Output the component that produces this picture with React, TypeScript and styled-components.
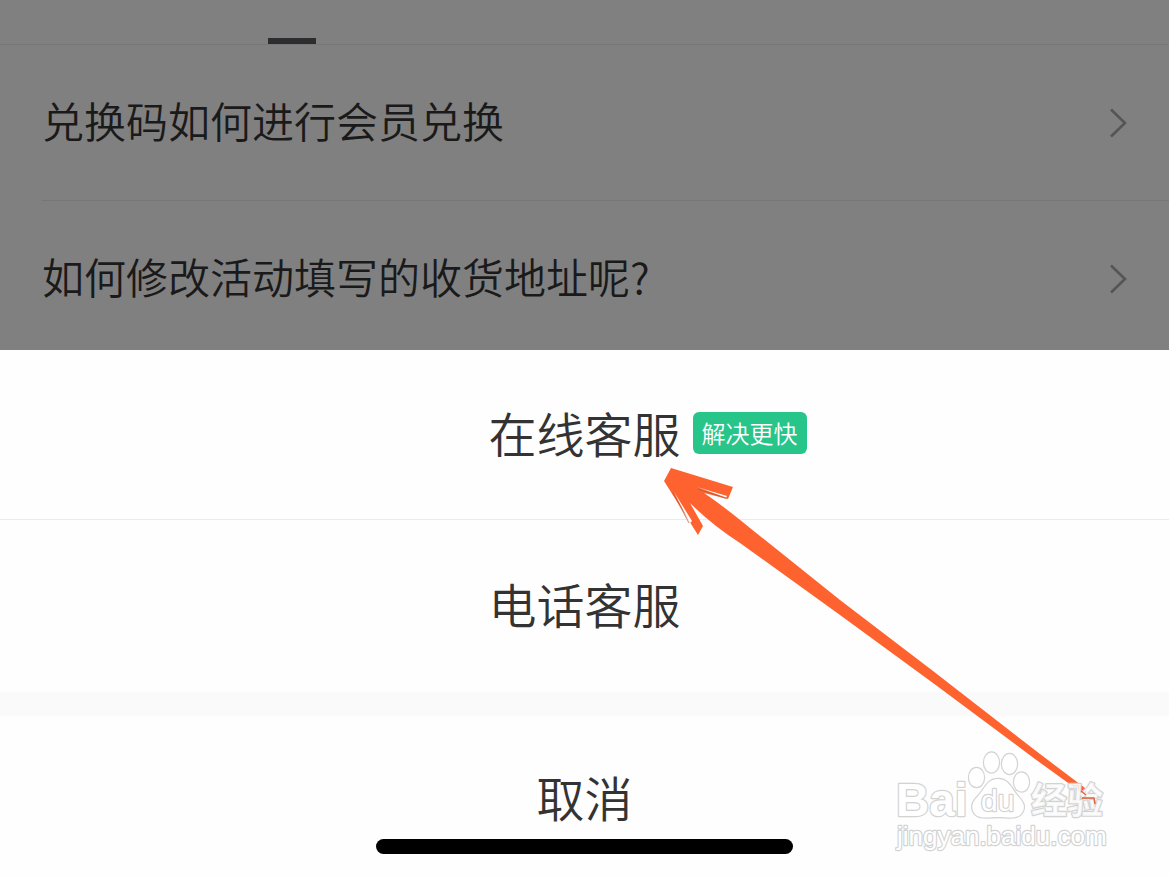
import React from 'react';
import styled, { createGlobalStyle } from 'styled-components';

const GlobalStyle = createGlobalStyle`
  * { box-sizing: border-box; }
  html, body, #root { height: 100%; }
  body {
    margin: 0;
    background: #fefefe;
    font-family: "Noto Sans CJK SC", "Liberation Sans", sans-serif;
    font-weight: 350;
    color: #333333;
  }
  button { font: inherit; color: inherit; cursor: pointer; }
`;

const Page = styled.div`
  display: flex;
  flex-direction: column;
  min-height: 100%;
`;

const Dimmed = styled.main`
  background: #808080;
  color: #1a1a1a;
`;

const Tabs = styled.nav`
  display: grid;
  grid-template-columns: 1fr 1fr;
  align-items: end;
  height: 45px;
  border-bottom: 1px solid #787879;
`;

const TabIndicator = styled.span`
  justify-self: center;
  width: 48px;
  height: 6px;
  background: #2d2d30;
`;

/* The open sheet covers the lower edge of the list. */
const Questions = styled.ul`
  list-style: none;
  margin: 0 0 -6px;
  padding: 0 0 0 42px;
`;

const Question = styled.li`
  & + & {
    border-top: 1px solid #767676;
  }
`;

const QuestionLink = styled.a`
  display: flex;
  align-items: center;
  justify-content: space-between;
  height: 155px;
  padding-right: 41px;
  color: inherit;
  text-decoration: none;
`;

const QuestionText = styled.span`
  padding-bottom: 6px;
  font-size: 42px;
  line-height: 60px;
`;

const Chevron = styled.svg`
  flex: none;
  width: 20px;
  height: 32px;
  fill: none;
  stroke: #555555;
  stroke-width: 2.6;
`;

const Sheet = styled.section`
  position: relative;
  flex: 1;
  display: flex;
  flex-direction: column;
  background: #fefefe;
`;

const Option = styled.button<{ $divided?: boolean }>`
  display: grid;
  grid-template-columns: 1fr auto 1fr;
  align-items: center;
  height: ${(p) => (p.$divided ? 170 : 172)}px;
  width: 100%;
  padding: 0 0 4px;
  border: 0;
  border-bottom: ${(p) => (p.$divided ? '1px solid #ebebeb' : '0')};
  background: transparent;
  font-size: 48px;
  line-height: 72px;
`;

const OptionLabel = styled.span`
  grid-column: 2;
  padding-bottom: 2px;
`;

const Badge = styled.span`
  justify-self: start;
  margin-left: 12px;
  padding: 0 9px;
  border-radius: 6px;
  background: #28c58b;
  color: #ffffff;
  font-size: 24px;
  line-height: 42px;
`;

const Gap = styled.div`
  height: 24px;
  background: #fafafa;
`;

const CancelArea = styled.div`
  display: flex;
  flex-direction: column;
  padding-bottom: 22px;
`;

const Cancel = styled(Option)`
  height: 123px;
  padding-top: 44px;
  align-items: start;
`;

const HomeBar = styled.div`
  align-self: center;
  width: 417px;
  max-width: 80%;
  height: 15px;
  border-radius: 8px;
  background: #000000;
`;

const Arrow = styled.svg`
  position: absolute;
  left: calc(50% + 75px);
  top: 110px;
  width: 440px;
  height: 350px;
  pointer-events: none;
`;

const Watermark = styled.svg`
  position: absolute;
  right: 57px;
  bottom: 17px;
  width: 222px;
  height: 110px;
  pointer-events: none;
  fill: #ffffff;
  stroke: #d3d3d3;
  stroke-width: 2.4;
  stroke-linejoin: round;
  paint-order: stroke;
`;

const questions = ['兑换码如何进行会员兑换', '如何修改活动填写的收货地址呢?'];

export default function App() {
  return (
    <>
      <GlobalStyle />
      <Page>
        <Dimmed>
          <Tabs>
            <TabIndicator />
          </Tabs>
          <Questions>
            {questions.map((q) => (
              <Question key={q}>
                <QuestionLink href="#">
                  <QuestionText>{q}</QuestionText>
                  <Chevron viewBox="0 0 20 32" aria-hidden="true">
                    <path d="M3 2.5 17 16 3 29.5" />
                  </Chevron>
                </QuestionLink>
              </Question>
            ))}
          </Questions>
        </Dimmed>
        <Sheet>
          <Option type="button" $divided>
            <OptionLabel>在线客服</OptionLabel>
            <Badge>解决更快</Badge>
          </Option>
          <Option type="button">
            <OptionLabel>电话客服</OptionLabel>
          </Option>
          <Gap />
          <CancelArea>
            <Cancel type="button">
              <OptionLabel>取消</OptionLabel>
            </Cancel>
            <HomeBar />
          </CancelArea>
          <Arrow viewBox="660 460 440 350" aria-hidden="true">
            <path
              fill="#fe632f"
              d="M671 468 733 487 728 499 704 493 Q722 505 750 528L840 600 933 671 1040 754 1085 788 1087 793 1082 793 1035 759 933 683 840 615 740 543 Q712 525 690 503L703 526 698 535 664 481Z"
            />
            <path fill="#ffffff" d="M697 487 727 496 726 497.500Z M674 492 692 521 690 523Z" />
            <path fill="none" stroke="#b8573a" strokeWidth="0.7" d="M698 489 726 498.500M673 493 689 523" />
            <path fill="none" stroke="#e2653f" strokeWidth="1.500" d="M1081 791 1086 794 1082 798 1094 798 1095 804" />
          </Arrow>
          <Watermark viewBox="890 750 222 110" role="img" aria-label="Baidu 经验">
            <ellipse cx="976.500" cy="777.500" rx="7.500" ry="9.500" />
            <ellipse cx="991.500" cy="762.500" rx="7.500" ry="10" />
            <ellipse cx="1009.500" cy="764" rx="7.500" ry="10" />
            <ellipse cx="1021.500" cy="782" rx="7.500" ry="9.500" />
            <path d="M998 779C987 779 985 789 979 795 973 801 971 805 973 811 977 820 987 817 998 817 1009 817 1019 820 1023 811 1026 804 1021 800 1017 795 1011 788 1009 779 998 779Z" />
            <g fontFamily="Liberation Sans, Noto Sans CJK SC, sans-serif">
              <text x="896" y="816" fontSize="46" fontWeight="700">Bai</text>
              <text x="981" y="811" fontSize="30" fontWeight="400">du</text>
              <text x="1031" y="814" fontSize="36" fontWeight="700" fillOpacity="0.8">经验</text>
              <text x="897" y="845" fontSize="26" fontWeight="400">jingyan.baidu.com</text>
            </g>
            <path fill="none" stroke="#e2653f" strokeWidth="1.500" d="M1081 791 1086 795M1082 798 1094 798 1095 804" />
          </Watermark>
        </Sheet>
      </Page>
    </>
  );
}
